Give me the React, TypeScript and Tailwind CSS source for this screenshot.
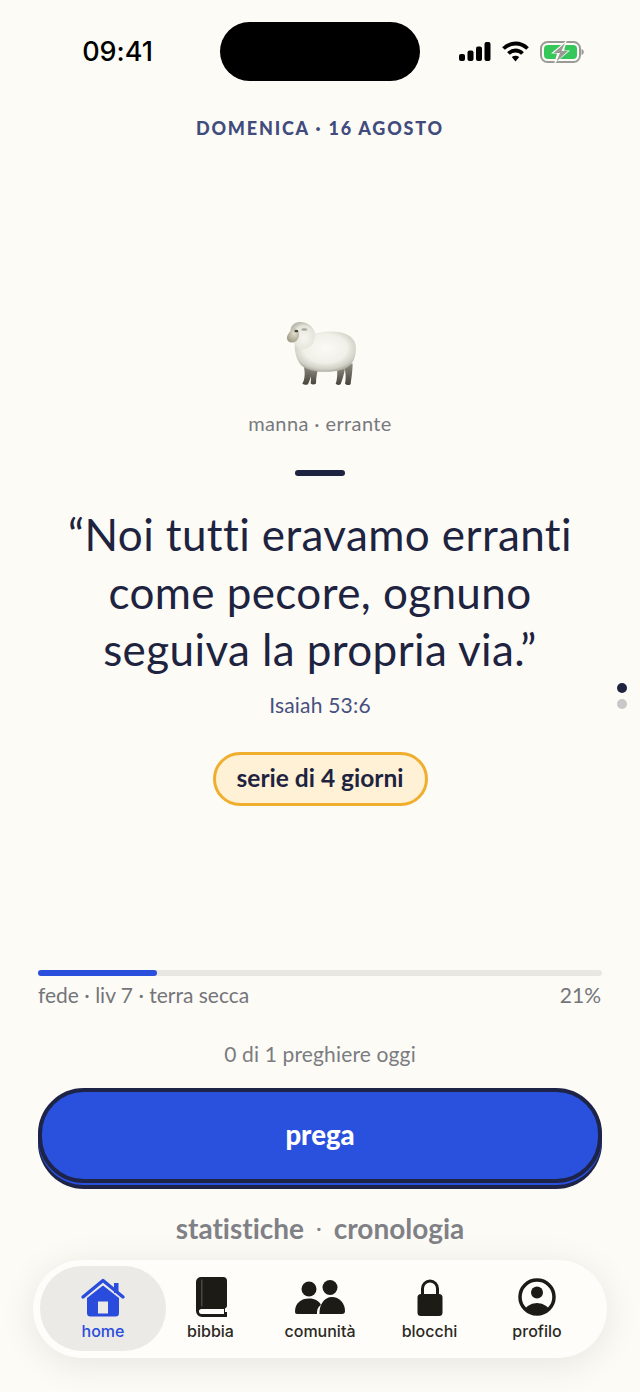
import React from "react";

const Sheep = () => (
  <svg width="70" height="67" viewBox="197 60 210 200" aria-hidden="true">
    <defs>
      <radialGradient id="wool" cx="50%" cy="42%" r="58%">
        <stop offset="0%" stopColor="#fbfaf6" />
        <stop offset="62%" stopColor="#f0efe8" />
        <stop offset="88%" stopColor="#d2d1c7" />
        <stop offset="100%" stopColor="#aeada2" />
      </radialGradient>
      <radialGradient id="cap" cx="55%" cy="60%" r="60%">
        <stop offset="0%" stopColor="#f6f5ef" />
        <stop offset="75%" stopColor="#e6e5dc" />
        <stop offset="100%" stopColor="#bdbcb0" />
      </radialGradient>
      <linearGradient id="leg" x1="0" y1="0" x2="0" y2="1">
        <stop offset="0%" stopColor="#8f8c81" />
        <stop offset="100%" stopColor="#46433c" />
      </linearGradient>
      <radialGradient id="face" cx="60%" cy="35%" r="75%">
        <stop offset="0%" stopColor="#e2dfd0" />
        <stop offset="100%" stopColor="#99957d" />
      </radialGradient>
      <filter id="soft"><feGaussianBlur stdDeviation="1.200" /></filter>
    </defs>
    <g filter="url(#soft)">
      <path d="M350 198 C352 225 350 240 346 251 Q352 257 361 252 C366 238 372 222 374 203Z" fill="url(#leg)" />
      <path d="M372 198 C378 225 376 240 374 251 Q382 258 391 252 C393 235 396 220 397 190Z" fill="url(#leg)" />
      <path d="M250 195 C256 225 252 240 246 250 Q253 257 263 252 C270 238 274 222 278 205Z" fill="url(#leg)" />
      <path d="M268 203 C274 225 272 240 271 250 Q279 256 287 250 C287 232 290 220 294 203Z" fill="url(#leg)" />
      <path d="M224 125 C232 96 270 104 300 97 C345 88 400 96 406 135 C410 168 398 200 365 209 C330 219 276 217 250 201 C230 188 220 155 224 125Z" fill="url(#wool)" />
      <path d="M212 82 C222 58 268 60 281 92 C292 116 272 155 240 146 C216 134 206 102 212 82Z" fill="url(#cap)" />
      <path d="M224 84 C211 88 198 104 200 116 C202 128 216 130 227 123 C239 112 241 92 224 84Z" fill="url(#face)" />
      <ellipse cx="228" cy="93" rx="6" ry="3.200" fill="#3f3c35" />
      <ellipse cx="252" cy="88" rx="9" ry="4" fill="#a9a79b" />
    </g>
  </svg>
);

const Signal = () => (
  <svg width="32" height="19" viewBox="0 0 32 19" fill="#000" aria-hidden="true">
    <rect x="0" y="12" width="6" height="7" rx="2" />
    <rect x="8.500" y="8.500" width="6" height="10.500" rx="2" />
    <rect x="17" y="4.500" width="6" height="14.500" rx="2" />
    <rect x="25.500" y="0" width="6" height="19" rx="2" />
  </svg>
);

const Wifi = () => (
  <svg width="27" height="21" viewBox="0 0 27 21" fill="none" stroke="#000" strokeWidth="3.800" aria-hidden="true">
    <path d="M1.500 7.500 C8.500 0.800 18.500 0.800 25.500 7.500" />
    <path d="M6.500 12.500 C10.500 8.500 16.500 8.500 20.500 12.500" />
    <path d="M9.800 16 L13.500 20.500 L17.200 16 C15 14.200 12 14.200 9.800 16Z" fill="#000" stroke="none" />
  </svg>
);

const Battery = () => (
  <svg width="44" height="24" viewBox="0 0 44 24" aria-hidden="true">
    <rect x="1" y="2" width="39" height="20" rx="6.500" fill="none" stroke="#9a9a97" strokeWidth="2" />
    <rect x="4" y="5" width="33" height="14" rx="4" fill="#35c759" />
    <path d="M41.500 9 C43 9.500 43.800 10.500 43.800 12 C43.800 13.500 43 14.500 41.500 15Z" fill="#9a9a97" />
    <path d="M27 0 L11 13.500 H17 L14 24 L30 10.500 H24Z" fill="#fcfbf6" />
    <path d="M25 3 L13.500 13 H20 L16.500 21.500 L28 11 H21.500Z" fill="#9a9a97" />
  </svg>
);

const HomeIcon = () => (
  <svg width="46" height="40" viewBox="0 0 46 40" fill="#2a4cdc" aria-hidden="true">
    <rect x="34" y="5" width="4.500" height="10" />
    <path d="M3 19 L23 2.500 L43 19" fill="none" stroke="#2a4cdc" strokeWidth="3.400" strokeLinecap="round" strokeLinejoin="round" />
    <path fillRule="evenodd" d="M23 7.500 L39 20 V35 A3.500 3.500 0 0 1 35.500 38.500 H10.500 A3.500 3.500 0 0 1 7 35 V20Z M18 23.500 V35.500 H28 V23.500Z" />
  </svg>
);

const BookIcon = () => (
  <svg width="34" height="40" viewBox="-2 0 34 40" aria-hidden="true">
    <path d="M5 0 H27 A4 4 0 0 1 31 4 V29 A3 3 0 0 1 29 31.500 V35 H31 V40 H6 A6 6 0 0 1 0 34 V5 A5 5 0 0 1 5 0Z" fill="#1d1b16" />
    <path d="M5 32 H28 V37 H6 A2.500 2.500 0 0 1 5 32Z" fill="#fefdf9" />
    <rect x="5" y="2.500" width="1.500" height="27" fill="#4a4843" />
  </svg>
);

const PeopleIcon = () => (
  <svg width="50" height="34" viewBox="0 0 50 34" fill="#1d1b16" aria-hidden="true">
    <circle cx="14" cy="9" r="7.500" />
    <circle cx="35" cy="7.500" r="7.500" />
    <path d="M0 32 C0 23 6 18.500 14 18.500 C20 18.500 24 21 26 25 C23 27 22 29 22 34 H2 A2 2 0 0 1 0 32Z" />
    <path d="M24.500 34 C24 25 29 17 37 17 C44 17 50 23 50 31 A3 3 0 0 1 47 34Z" />
  </svg>
);

const LockIcon = () => (
  <svg width="26" height="37" viewBox="0 0 26 37" aria-hidden="true">
    <path d="M5.500 17 V9.500 A7.500 7.500 0 0 1 20.500 9.500 V17" fill="none" stroke="#1d1b16" strokeWidth="3" />
    <rect x="0.500" y="15" width="25" height="22" rx="3.500" fill="#1d1b16" />
  </svg>
);

const ProfileIcon = () => (
  <svg width="38" height="38" viewBox="0 0 38 38" aria-hidden="true">
    <defs>
      <clipPath id="profile-clip"><circle cx="19" cy="19" r="17" /></clipPath>
    </defs>
    <circle cx="19" cy="14.500" r="6" fill="#1d1b16" />
    <ellipse cx="19" cy="35" rx="13" ry="10" fill="#1d1b16" clipPath="url(#profile-clip)" />
    <circle cx="19" cy="19" r="17" fill="none" stroke="#1d1b16" strokeWidth="3.500" />
  </svg>
);

const items = [
  { label: "bibbia", w: "w-[89px]", icon: <BookIcon /> },
  { label: "comunità", w: "w-[130px]", icon: <PeopleIcon /> },
  { label: "blocchi", w: "w-[89px]", icon: <LockIcon /> },
  { label: "profilo", w: "w-[126px]", icon: <ProfileIcon /> },
];

export default function App() {
  return (
    <div className="relative flex h-[1392px] w-[640px] flex-col overflow-hidden bg-[#fcfbf6] font-['Lato',sans-serif] text-[#1e2340] [font-variant-ligatures:none]">
      <header className="flex h-[116px] items-start pt-[22px]">
        <div className="flex h-[59px] w-[220px] items-center justify-end pr-[67px] font-['Inter',sans-serif] text-[27px] font-medium leading-none text-black">
          09:41
        </div>
        <div className="h-[59px] w-[200px] rounded-[30px] bg-black" />
        <div className="flex h-[59px] items-center pl-[39px]">
          <Signal />
          <span className="ml-[11px]"><Wifi /></span>
          <span className="ml-[11px]"><Battery /></span>
        </div>
      </header>

      <div className="text-center text-[18px] font-black leading-6 tracking-[0.1em] text-[#414b7c]">
        DOMENICA · 16 AGOSTO
      </div>

      <main className="flex flex-col items-center">
        <div className="mt-[180px] flex h-[67px] items-center pl-[2px]"><Sheep /></div>
        <p className="mt-[22px] text-[20px] leading-7 tracking-[0.02em] text-[#78797e]">manna · errante</p>
        <div className="mt-[33px] h-[6px] w-[50px] rounded-full bg-[#1e2340]" />
        <blockquote className="mt-[30px] text-center text-[44px] font-normal leading-[57.500px] tracking-[0.4px]">
          “Noi tutti eravamo erranti<br />come pecore, ognuno<br />seguiva la propria via.”
        </blockquote>
        <p className="mt-[12px] text-[21px] leading-7 tracking-[0.2px] text-[#47507f]">Isaiah 53:6</p>
        <div className="mt-[33px] flex h-[54px] w-[215px] items-center justify-center rounded-full border-[3px] border-[#f0ae2e] bg-[#fff1d6] text-[24.500px] font-bold">
          serie di 4 giorni
        </div>
      </main>

      <section className="mt-[164px] px-[38px]">
        <div className="h-[6px] rounded-full bg-[#e8e7e1]">
          <div className="h-full w-[119px] rounded-full bg-[#2a4fdd]" />
        </div>
        <div className="mt-[5px] flex justify-between pr-[1px] text-[21px] leading-7 text-[#74757a]">
          <span>fede · liv 7 · terra secca</span>
          <span>21%</span>
        </div>
        <p className="mt-[31px] text-center text-[21px] leading-7 tracking-[0.15px] text-[#7b7c81]">0 di 1 preghiere oggi</p>
        <button className="mt-[20px] flex h-[95px] w-full items-center justify-center rounded-[46px] border-4 border-[#1e2447] bg-[#2a50de] text-[27.500px] font-black text-white shadow-[0_2px_0_#2a50de,0_6px_0_#1e2447]">
          prega
        </button>
      </section>

      <div className="mt-[27px] flex h-[36px] items-center justify-center text-[28px] font-bold leading-9 text-[#808186]">
        <span>statistiche</span>
        <span className="mx-[12px] text-[22px] font-normal">·</span>
        <span>cronologia</span>
      </div>

      <nav className="mx-[33px] mt-[14px] flex h-[98px] items-center rounded-[49px] bg-[#fefdf9] px-[7px] font-['Inter',sans-serif] shadow-[0_6px_36px_rgba(0,0,0,0.09)]">
        <div className="flex h-[85px] w-[126px] flex-col items-center rounded-[42px] bg-[#ebeae6] pt-[12px]">
          <HomeIcon />
          <span className="mt-[3px] text-[16px] font-medium leading-5 text-[#2a4cdc]">home</span>
        </div>
        {items.map((it) => (
          <div key={it.label} className={`flex h-[85px] flex-col items-center pt-[11px] ${it.w}`}>
            <div className="flex h-[40px] items-center justify-center">{it.icon}</div>
            <span className="mt-[4px] text-[16px] font-medium leading-5 text-[#2b2924]">{it.label}</span>
          </div>
        ))}
      </nav>

      <div className="absolute left-[617px] top-[683px] flex flex-col gap-[6px]">
        <span className="h-[10px] w-[10px] rounded-full bg-[#1e2340]" />
        <span className="h-[10px] w-[10px] rounded-full bg-[#c9c8c8]" />
      </div>
    </div>
  );
}
